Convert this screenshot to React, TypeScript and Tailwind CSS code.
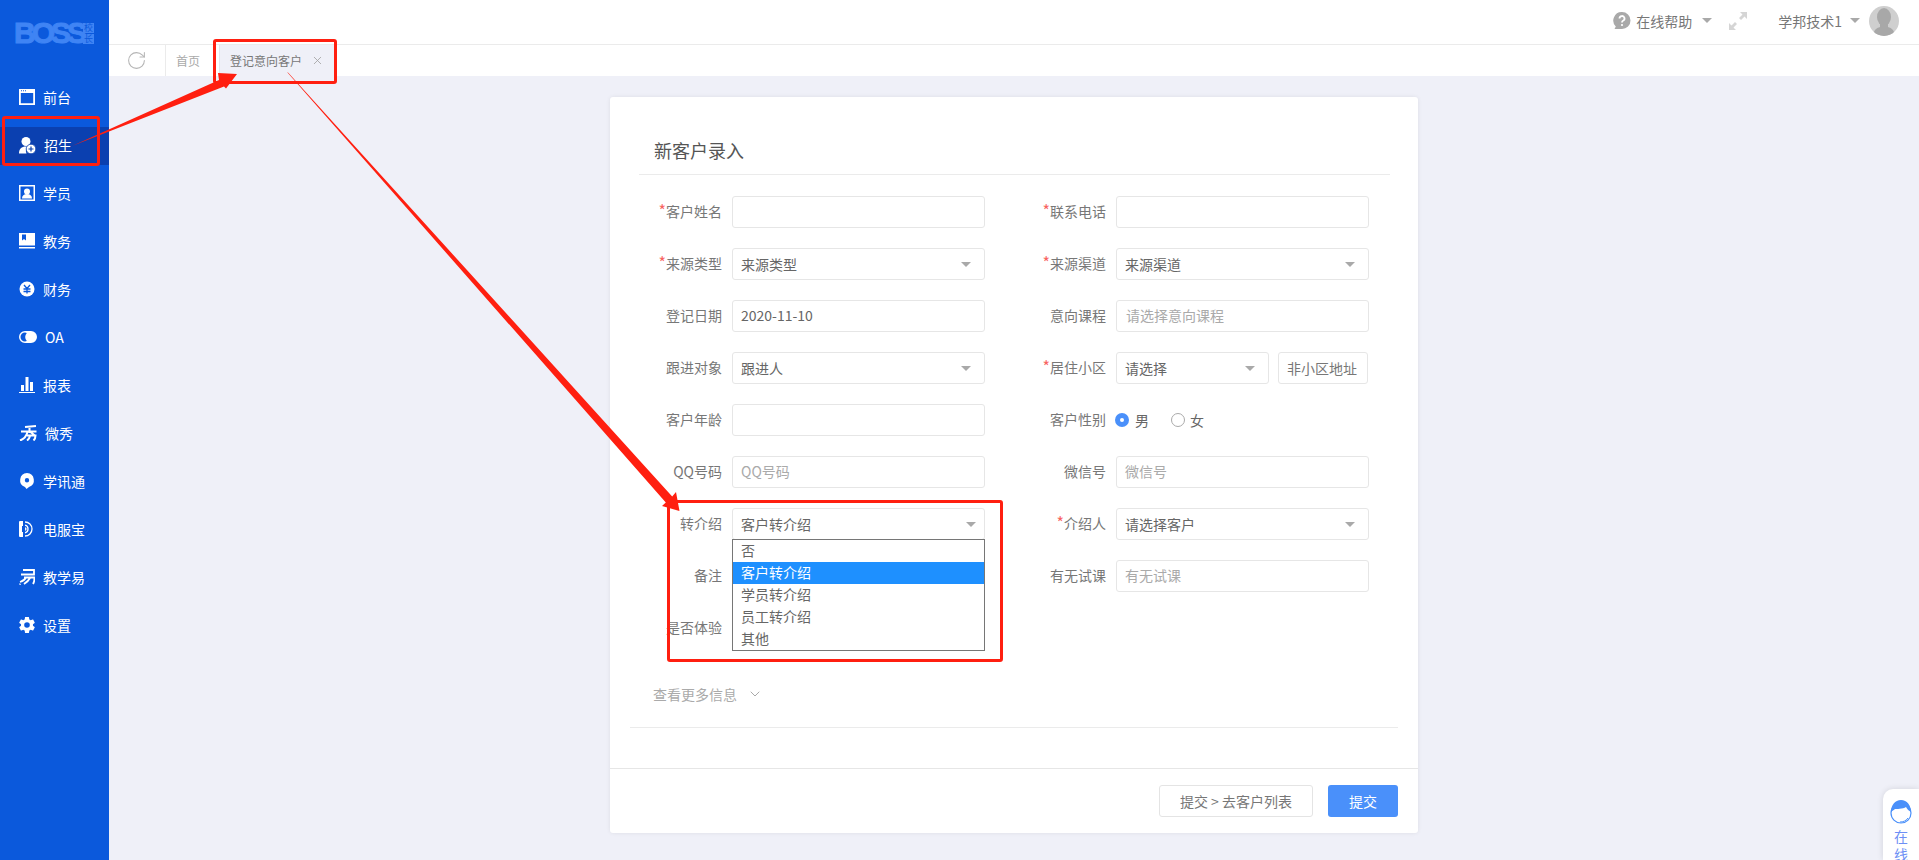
import React from 'react';
import { RotateCw, X, ChevronDown } from 'lucide-react';

const Caret = ({ className = '' }: { className?: string }) => (
  <span className={`block w-0 h-0 border-x-[5px] border-x-transparent border-t-[5px] border-t-[#a9a9a9] ${className}`} />
);

const iconWhite = 'w-[16px] h-[16px] shrink-0 text-white';
const iconWide = 'w-[18px] h-[16px] shrink-0 text-white';

const icons: Record<string, React.ReactNode> = {
  front: (
    <svg viewBox="0 0 16 16" className={iconWhite} fill="currentColor">
      <path d="M0 0h16v16H0zM1.800 4v10.200h12.400V4z" fillRule="evenodd" />
      <path d="M2 1.200h1v1H2zM4 1.200h1v1H4zM6 1.200h1v1H6z" fill="#0b59dc" />
    </svg>
  ),
  enroll: (
    <svg viewBox="0 0 17 17" className="w-[17px] h-[17px] shrink-0 text-white" fill="currentColor">
      <circle cx="7" cy="4.500" r="4.500" />
      <path d="M0 16.500c0-4.500 2.500-7 7-7 1 0 1.500.1 2.200.3A5.500 5.500 0 0 0 7.500 16.500z" />
      <circle cx="12" cy="12" r="4.800" stroke="#0b40b0" strokeWidth="0.800" />
      <path d="M9.500 12h5M12 9.500v5" stroke="#0b40b0" strokeWidth="1.200" />
    </svg>
  ),
  student: (
    <svg viewBox="0 0 16 16" className={iconWhite} fill="currentColor">
      <path d="M0 0h16v16H0zM1.500 1.500v13h13v-13z" fillRule="evenodd" />
      <circle cx="8" cy="6.500" r="3" />
      <path d="M3 13.500c0-3 2-4.500 5-4.500s5 1.500 5 4.500z" />
    </svg>
  ),
  teach: (
    <svg viewBox="0 0 16 16" className={iconWhite} fill="currentColor">
      <path d="M0 0h16v12.500H0zM3 1.500v6l2-1.500 2 1.500v-6z" fillRule="evenodd" />
      <path d="M0 14h16v1.500H0z" />
    </svg>
  ),
  finance: (
    <svg viewBox="0 0 16 16" className={iconWhite} fill="currentColor">
      <circle cx="8" cy="8" r="7.500" />
      <path d="M5 4l3 3.500L11 4M4.500 8h7M4.500 10.500h7M8 7.500v5" stroke="#0b59dc" strokeWidth="1.300" fill="none" />
    </svg>
  ),
  oa: (
    <svg viewBox="0 0 18 16" className={iconWide} fill="currentColor">
      <path d="M6 2h6a6 6 0 0 1 0 12H6A6 6 0 0 1 6 2zM6 3.500a4.500 4.500 0 0 0 0 9c.7 0 1.300-.2 1.800-.4A6 6 0 0 1 7.800 3.900 4.500 4.500 0 0 0 6 3.500z" fillRule="evenodd" />
    </svg>
  ),
  report: (
    <svg viewBox="0 0 16 16" className={iconWhite} fill="currentColor">
      <path d="M2 8h3v6H2zM6.500 0h3v14h-3zM11 5h3v9h-3zM0 15h16v1H0z" />
    </svg>
  ),
  show: (
    <svg viewBox="0 0 18 16" className={iconWide} fill="none" stroke="currentColor" strokeWidth="2">
      <path d="M6 2l11-1M10.500 1v7M2 6.500h15.500M8.500 7C7.500 11 5 14 1 15.500M11.500 7l5 4M8 10.500h8.500c0 2-.5 3.500-2 5M11 11c-.5 2-1.500 3.500-3 4.500" />
    </svg>
  ),
  msg: (
    <svg viewBox="0 0 16 16" className={iconWhite} fill="currentColor">
      <path d="M8 0a7.200 7.200 0 0 1 2 14L7.500 16 6 14A7.200 7.200 0 0 1 8 0zm0 5a2.200 2.200 0 1 0 0 4.400A2.200 2.200 0 0 0 8 5z" fillRule="evenodd" />
    </svg>
  ),
  phone: (
    <svg viewBox="0 0 16 16" className={iconWhite}>
      <path d="M1 0h3v5H3v6h1v5H1a1 1 0 0 1-1-1V1a1 1 0 0 1 1-1z" fill="currentColor" />
      <path d="M6 1a7 7 0 0 1 0 14M6 4.200a3.900 3.900 0 0 1 0 7.600M6 7a1 1 0 0 1 0 2" stroke="currentColor" strokeWidth="1.300" fill="none" />
    </svg>
  ),
  easy: (
    <svg viewBox="0 0 16 16" className={iconWhite} fill="none" stroke="currentColor" strokeWidth="1.800">
      <path d="M4 1h11v4.500H2M5 8.500h10.500c0 3-.5 5-1.500 6.500M7 8.500c-1 2-3 3.500-6 4.500M11 9c-1 2-3 4-6 6M.5 15.500l1-.5" />
    </svg>
  ),
  setting: (
    <svg viewBox="2.500 2 19 20" className={iconWhite} fill="currentColor">
      <path d="M19.430 12.980c.040-.320.070-.640.070-.980s-.030-.660-.070-.980l2.110-1.650c.190-.150.240-.420.120-.640l-2-3.460c-.120-.220-.390-.300-.610-.220l-2.490 1c-.520-.400-1.080-.730-1.690-.980l-.380-2.650A.488.488 0 0 0 14 2h-4c-.250 0-.460.180-.490.420l-.380 2.650c-.610.250-1.170.590-1.690.980l-2.490-1c-.230-.090-.490 0-.610.220l-2 3.460c-.130.220-.070.490.120.640l2.110 1.650c-.040.320-.070.650-.070.980s.030.660.070.980l-2.110 1.650c-.190.150-.240.420-.120.640l2 3.460c.120.220.390.300.610.220l2.490-1c.520.400 1.080.730 1.690.980l.380 2.650c.030.240.240.420.490.420h4c.250 0 .460-.180.490-.420l.380-2.650c.610-.250 1.170-.590 1.690-.980l2.490 1c.230.090.490 0 .610-.220l2-3.460c.120-.220.070-.490-.120-.640l-2.110-1.650zM12 15.500a3.500 3.500 0 1 1 0-7 3.500 3.500 0 0 1 0 7z" />
    </svg>
  ),
};

const menu = [
  { key: 'front', label: '前台' },
  { key: 'enroll', label: '招生', active: true },
  { key: 'student', label: '学员' },
  { key: 'teach', label: '教务' },
  { key: 'finance', label: '财务' },
  { key: 'oa', label: 'OA' },
  { key: 'report', label: '报表' },
  { key: 'show', label: '微秀' },
  { key: 'msg', label: '学讯通' },
  { key: 'phone', label: '电服宝' },
  { key: 'easy', label: '教学易' },
  { key: 'setting', label: '设置' },
];

const Sidebar = () => (
  <aside className="w-[109px] shrink-0 bg-[#0b59dc]">
    <div className="h-[73px] pt-[22px] pl-[14px] flex items-start">
      <span className="w-[69px] text-[30px] leading-[22px] font-bold tracking-[-4px] text-[#3f84f4] [-webkit-text-stroke:1px_#3f84f4] font-['Liberation_Sans',sans-serif]">BOSS</span>
      <span className="flex flex-col gap-[1px] pt-[1px] text-[9px] leading-[10px] text-[#0b59dc]">
        <span className="w-[11px] h-[10px] bg-[#3f84f4] text-center">校</span>
        <span className="w-[11px] h-[10px] bg-[#3f84f4] text-center">长</span>
      </span>
    </div>
    <nav className="flex flex-col">
      {menu.map((m) => (
        <div
          key={m.key}
          className={`pl-[19px] flex items-center gap-[8px] text-sm text-white ${m.active ? 'h-[38px] mt-[6px] mb-[4px] pb-[2px] bg-[#0b40b0]' : 'h-[48px]'}`}
        >
          {icons[m.key]}
          <span>{m.label}</span>
        </div>
      ))}
    </nav>
  </aside>
);

const TopBar = () => (
  <header className="h-[45px] pb-[3px] bg-white border-b border-[#ebebeb] flex items-center justify-end pr-[20px] text-sm text-[#777]">
    <svg viewBox="0 0 18 18" className="w-[18px] h-[18px] text-[#a9a9a9]" fill="currentColor">
      <path d="M9 0a8.500 8.500 0 0 1 0 17H1.500l1.300-2.500A8.500 8.500 0 0 1 9 0z" />
      <path d="M6.500 6.500a2.500 2.500 0 1 1 3.500 2.300c-.7.300-1 .7-1 1.700" stroke="#fff" strokeWidth="1.800" fill="none" />
      <circle cx="9" cy="13" r="1.100" fill="#fff" />
    </svg>
    <span className="ml-[5px]">在线帮助</span>
    <Caret className="ml-[10px]" />
    <svg viewBox="0 0 18 18" className="w-[18px] h-[18px] ml-[17px] text-[#d5d5d5]" fill="currentColor">
      <path d="M11 0h7v7l-2.500-2.500-3.500 3.500-2-2 3.500-3.500zM0 11l2.500 2.500L6 10l2 2-3.500 3.500L7 18H0z" />
    </svg>
    <span className="ml-[31px]">学邦技术1</span>
    <Caret className="ml-[8px]" />
    <div className="ml-[9px] w-[30px] h-[30px] rounded-full bg-[#cfcfcf] overflow-hidden">
      <svg viewBox="0 0 30 30" className="w-full h-full text-[#a8a8a8]" fill="currentColor">
        <ellipse cx="15" cy="11" rx="7" ry="9" />
        <path d="M11 18h8v3c3 1 6 2 7 9H4c1-7 4-8 7-9z" />
      </svg>
    </div>
  </header>
);

const TabBar = () => (
  <div className="h-[31px] bg-white flex text-xs text-[#aaa]">
    <div className="w-[57px] border-r border-[#ebebeb] flex items-center justify-center pr-[2px]">
      <RotateCw className="w-[21px] h-[21px] text-[#b5b5b5]" strokeWidth={1.2} />
    </div>
    <div className="w-[53px] flex items-center pl-[10px]">首页</div>
    <div className="w-[116px] bg-[#eff0f8] border-l border-[#e4e4ec] flex items-center pl-[10px] text-[#777]">
      登记意向客户
      <X className="w-[13px] h-[13px] ml-[9px] text-[#a0a0a0]" strokeWidth={1.5} />
    </div>
  </div>
);

const inputBase = 'h-[32px] rounded-[3px] border border-[#e6e6e6] bg-white flex items-center pl-[8px] text-sm';

const TextInput = ({ value, placeholder, indent }: { value?: string; placeholder?: string; indent?: boolean }) => (
  <div className={`${inputBase} w-[253px] pb-[2px] ${value ? 'text-[#666]' : 'text-[#aaa]'}`}>
    <span className={indent ? 'ml-[1px]' : ''}>{value || placeholder}</span>
  </div>
);

const SelectBox = ({ value, width = 'w-[253px]', caretGap = 'pr-[13px]' }: { value: string; width?: string; caretGap?: string }) => (
  <div className={`${inputBase} ${width} ${caretGap} text-[#666] justify-between`}>
    <span>{value}</span>
    <Caret />
  </div>
);

const Field = ({ label, required, children }: { label: string; required?: boolean; children?: React.ReactNode }) => (
  <div className="flex items-center gap-[10px] h-[32px]">
    <label className="w-[83px] pb-[2px] text-right text-sm text-[#777] whitespace-nowrap">
      {required && <span className="text-base leading-none text-[#f8645f]">*</span>}
      {label}
    </label>
    {children}
  </div>
);

const Gender = () => (
  <div className="-ml-[1px] flex items-center text-sm text-[#666]">
    <span className="w-[14px] h-[14px] rounded-full bg-[#4a90fa] flex items-center justify-center">
      <span className="w-[4px] h-[4px] rounded-full bg-white" />
    </span>
    <span className="ml-[6px]">男</span>
    <span className="w-[14px] h-[14px] rounded-full border border-[#aaa] ml-[22px]" />
    <span className="ml-[5px]">女</span>
  </div>
);

const options = ['否', '客户转介绍', '学员转介绍', '员工转介绍', '其他'];

const Form = () => (
  <div className="ml-[29px] grid grid-cols-[346px_346px] gap-x-[38px] gap-y-[20px]">
    <Field label="客户姓名" required><TextInput /></Field>
    <Field label="联系电话" required><TextInput /></Field>
    <Field label="来源类型" required><SelectBox value="来源类型" /></Field>
    <Field label="来源渠道" required><SelectBox value="来源渠道" /></Field>
    <Field label="登记日期"><TextInput value="2020-11-10" /></Field>
    <Field label="意向课程"><TextInput placeholder="请选择意向课程" indent /></Field>
    <Field label="跟进对象"><SelectBox value="跟进人" /></Field>
    <Field label="居住小区" required>
      <div className="flex gap-[9px]">
        <SelectBox value="请选择" width="w-[153px]" />
        <div className={`${inputBase} w-[90px] text-[#777]`}>非小区地址</div>
      </div>
    </Field>
    <Field label="客户年龄"><TextInput /></Field>
    <Field label="客户性别"><Gender /></Field>
    <Field label="QQ号码"><TextInput placeholder="QQ号码" /></Field>
    <Field label="微信号"><TextInput placeholder="微信号" /></Field>
    <Field label="转介绍">
      <div className="relative">
        <SelectBox value="客户转介绍" caretGap="pr-[8px]" />
        {/* native list that was open when the page was captured */}
        <ul className="absolute z-10 left-0 top-[31px] w-[253px] bg-white border border-[#767676] text-sm text-[#666]">
          {options.map((o) => (
            <li key={o} className={`h-[22px] leading-[20px] pl-[8px] ${o === '客户转介绍' ? 'bg-[#1e90ff] text-white' : ''}`}>{o}</li>
          ))}
        </ul>
      </div>
    </Field>
    <Field label="介绍人" required><SelectBox value="请选择客户" /></Field>
    <Field label="备注"><TextInput /></Field>
    <Field label="有无试课"><TextInput placeholder="有无试课" /></Field>
    <Field label="是否体验"><TextInput /></Field>
  </div>
);

const Card = () => (
  <section className="mx-auto mt-[21px] w-[808px] h-[736px] bg-white rounded-[3px] shadow-[0_0_4px_rgba(0,0,0,0.08)] flex flex-col">
    <div className="ml-[29px] mr-[28px] h-[78px] border-b border-[#ebebeb] flex items-end pb-[10px] pl-[15px] text-lg text-[#555]">新客户录入</div>
    <div className="pt-[21px]">
      <Form />
    </div>
    <div className="ml-[43px] mt-[40px] flex items-center text-sm text-[#aaa]">
      查看更多信息
      <ChevronDown className="w-[16px] h-[16px] ml-[10px]" strokeWidth={1.5} />
    </div>
    <div className="mx-[20px] mt-[23px] border-b border-[#ebebeb]" />
    <div className="mt-auto h-[65px] border-t border-[#e6e6e6] flex items-center justify-end pr-[20px] gap-[15px] text-sm">
      <button className="w-[154px] h-[32px] rounded-[3px] border border-[#e4e4e4] text-[#777]">提交 &gt; 去客户列表</button>
      <button className="w-[70px] h-[32px] rounded-[3px] bg-[#4a90fa] text-white">提交</button>
    </div>
  </section>
);

// red marks drawn over the capture
const Annotations = () => (
  <>
    <div className="absolute left-[2px] top-[116px] w-[98px] h-[50px] border-[3px] border-[#ff1f10] rounded-[3px]" />
    <div className="absolute left-[213px] top-[39px] w-[124px] h-[45px] border-[3px] border-[#ff1f10] rounded-[3px]" />
    <div className="absolute left-[667px] top-[500px] w-[336px] h-[162px] border-[3px] border-[#ff1f10] rounded-[3px]" />
    <svg className="absolute left-0 top-0 w-[1919px] h-[860px] pointer-events-none" viewBox="0 0 1919 860" fill="#ff1f10">
      <path d="M72 146 L219 80 L218 73 L237 74 L226 88.500 L224 86.500 Z" />
      <path d="M287 72 L288.500 73 L672.200 496.600 L676 492 L679.500 511 L662 506 L665.800 502.400 Z" />
    </svg>
  </>
);

const ChatWidget = () => (
  <div className="absolute right-0 top-[789px] w-[36px] h-[71px] bg-white rounded-tl-[10px] shadow-[0_0_6px_rgba(0,0,0,0.12)] flex flex-col items-center overflow-hidden pt-[11px]">
    <svg viewBox="0 0 22 24" className="w-[22px] h-[24px] shrink-0">
      <circle cx="11" cy="13" r="10" fill="#fff" stroke="#4a90fa" strokeWidth="1.200" />
      <path d="M1 12C1 5 5 0 11 0s10 5 10 12c-2-1-4-3-5-5-3 2-10 2-11 2-1 1-3 2-4 3z" fill="#4a90fa" />
      <path d="M10 22c3 0 6-1 8-4" stroke="#4a90fa" fill="none" />
    </svg>
    <div className="mt-[3px] text-sm leading-[18px] text-[#6d8ff5] text-center">在<br />线</div>
  </div>
);

export default function App() {
  return (
    <div className="relative h-[860px] w-full flex overflow-hidden bg-[#eff0f8] font-['Noto_Sans_CJK_SC','Noto_Sans',sans-serif]">
      <Sidebar />
      <main className="flex-1 min-w-0 flex flex-col">
        <TopBar />
        <TabBar />
        <Card />
      </main>
      <Annotations />
      <ChatWidget />
    </div>
  );
}
